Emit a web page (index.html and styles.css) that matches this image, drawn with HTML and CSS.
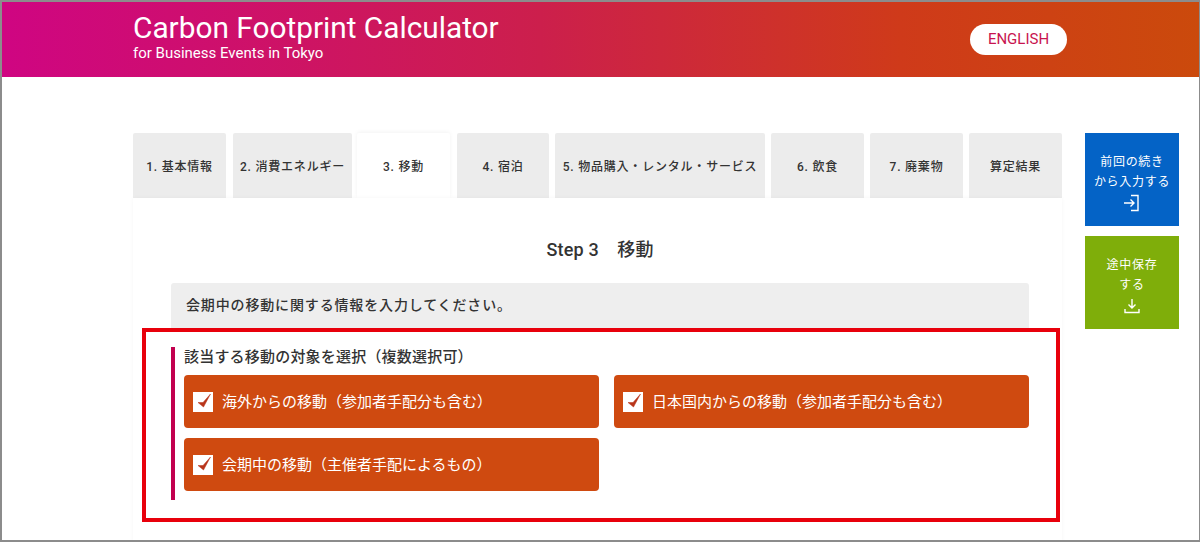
FILE: index.html
```html
<!DOCTYPE html>
<html lang="ja">
<head>
    <meta charset="UTF-8">
    <meta name="viewport" content="width=device-width, initial-scale=1.0">
    <title>Carbon Footprint Calculator</title>
    <link rel="stylesheet" href="styles.css">
</head>
<body>
    <div class="page">
        <header class="site-header">
            <div class="brand">
                <h1>Carbon Footprint Calculator</h1>
                <p class="subtitle">for Business Events in Tokyo</p>
            </div>
            <a href="#" class="lang-button">ENGLISH</a>
        </header>

        <div class="layout">
            <main class="main-column">
                <nav class="tabs">
                    <a href="#" class="tab tab-1">1. 基本情報</a>
                    <a href="#" class="tab tab-2">2. 消費エネルギー</a>
                    <a href="#" class="tab tab-3 active">3. 移動</a>
                    <a href="#" class="tab tab-4">4. 宿泊</a>
                    <a href="#" class="tab tab-5">5. 物品購入・レンタル・サービス</a>
                    <a href="#" class="tab tab-6">6. 飲食</a>
                    <a href="#" class="tab tab-7">7. 廃棄物</a>
                    <a href="#" class="tab tab-8">算定結果</a>
                </nav>

                <section class="panel">
                    <h2 class="step-title">Step 3　移動</h2>
                    <p class="notice">会期中の移動に関する情報を入力してください。</p>

                    <div class="target-section">
                        <h3>該当する移動の対象を選択（複数選択可）</h3>
                        <div class="options">
                            <label class="option">
                                <svg class="check" viewBox="0 0 20 20"><rect width="20" height="20" fill="#fff"/><path d="M5 10.5l5.5 4.5L17.5 2 10 10.5z" fill="#b8341a" stroke="#b8341a" stroke-width="0.5" stroke-linejoin="round"/></svg>
                                <span>海外からの移動（参加者手配分も含む）</span>
                            </label>
                            <label class="option">
                                <svg class="check" viewBox="0 0 20 20"><rect width="20" height="20" fill="#fff"/><path d="M5 10.5l5.5 4.5L17.5 2 10 10.5z" fill="#b8341a" stroke="#b8341a" stroke-width="0.5" stroke-linejoin="round"/></svg>
                                <span>日本国内からの移動（参加者手配分も含む）</span>
                            </label>
                            <label class="option">
                                <svg class="check" viewBox="0 0 20 20"><rect width="20" height="20" fill="#fff"/><path d="M5 10.5l5.5 4.5L17.5 2 10 10.5z" fill="#b8341a" stroke="#b8341a" stroke-width="0.5" stroke-linejoin="round"/></svg>
                                <span>会期中の移動（主催者手配によるもの）</span>
                            </label>
                        </div>
                    </div>

                    <div class="highlight-box"></div>
                </section>
            </main>

            <aside class="side-actions">
                <a href="#" class="side-button side-blue">
                    <span>前回の続き</span>
                    <span>から入力する</span>
                    <svg viewBox="0 0 18 18" width="18" height="18" fill="none" stroke="#fff" stroke-width="1.4"><path d="M1 9h10M7.5 5.5L11 9l-3.5 3.5"/><path d="M8 1.5h7v15H8"/></svg>
                </a>
                <a href="#" class="side-button side-green">
                    <span>途中保存</span>
                    <span>する</span>
                    <svg viewBox="0 0 18 18" width="18" height="18" fill="none" stroke="#fff" stroke-width="1.4"><path d="M9 2v9M5.5 7.5L9 11l3.5-3.5"/><path d="M2 12v3.5h14V12"/></svg>
                </a>
            </aside>
        </div>
    </div>
</body>
</html>
```

FILE: styles.css
```css
* {
    margin: 0;
    padding: 0;
    box-sizing: border-box;
}

body {
    background-color: #ffffff;
    color: #333333;
    font-family: Roboto, "Noto Sans CJK JP", sans-serif;
}

a {
    text-decoration: none;
}

.page {
    width: 1200px;
    height: 542px;
    overflow: hidden;
    border: 2px solid #8c8c8c;
    border-right-width: 1px;
}

.site-header {
    height: 75px;
    padding: 0 132px 0 131px;
    display: flex;
    justify-content: space-between;
    align-items: center;
    background: linear-gradient(90deg, #cf0582 0%, #cc1f4c 45%, #cf3a1a 75%, #cb4a0c 100%);
    color: #ffffff;
}

.brand h1 {
    font-size: 29.8px;
    font-weight: 400;
    line-height: 34px;
    margin-top: -8px;
}

.subtitle {
    font-size: 15px;
    line-height: 16px;
    margin-top: 0;
}

.lang-button {
    width: 97px;
    height: 31px;
    border-radius: 16px;
    background-color: #ffffff;
    color: #c8144f;
    font-size: 15px;
    line-height: 31px;
    text-align: center;
}

.layout {
    display: flex;
    padding: 56px 0 0 131px;
}

.main-column {
    width: 929px;
}

.tabs {
    display: flex;
    height: 65px;
}

.tab {
    display: flex;
    align-items: center;
    justify-content: center;
    background-color: #ececec;
    border-radius: 2px 2px 0 0;
    color: #333333;
    font-size: 12px;
    font-weight: 500;
    letter-spacing: 0.8px;
    white-space: nowrap;
}

.tab-1 { width: 93px; margin-right: 7px; }
.tab-2 { width: 119px; margin-right: 5px; }
.tab-3 { width: 93px; margin-right: 7px; }
.tab-4 { width: 92px; margin-right: 6px; }
.tab-5 { width: 210px; margin-right: 6px; }
.tab-6 { width: 93px; margin-right: 6px; }
.tab-7 { width: 93px; margin-right: 6px; }
.tab-8 { width: 93px; }

.tab.active {
    background-color: #ffffff;
    box-shadow: 0 -1px 4px rgba(0, 0, 0, 0.05);
}

.panel {
    position: relative;
    padding: 38px 33px 0 38px;
    box-shadow: 0 0 4px rgba(0, 0, 0, 0.04);
    height: 345px;
    background-color: #ffffff;
}

.step-title {
    font-size: 18px;
    font-weight: 500;
    line-height: 28px;
    letter-spacing: 0.2px;
    text-align: center;
}

.notice {
    margin-top: 19px;
    height: 47px;
    padding: 0 15px;
    background-color: #eeeeee;
    font-size: 14px;
    font-weight: 500;
    line-height: 44px;
    letter-spacing: 0.85px;
    border-radius: 3px 3px 0 0;
}

.target-section {
    margin-top: 17px;
    padding-left: 9px;
    height: 153px;
    border-left: 4px solid #c2004f;
}

.target-section h3 {
    font-size: 15px;
    font-weight: 500;
    line-height: 20px;
    margin-bottom: 8px;
    letter-spacing: 0.2px;
}

.options {
    display: grid;
    grid-template-columns: 415px 415px;
    column-gap: 15px;
    row-gap: 10px;
}

.option {
    height: 53px;
    padding-left: 9px;
    display: flex;
    align-items: center;
    gap: 9px;
    background-color: #cf4a10;
    border-radius: 4px;
    color: #ffffff;
    font-size: 15px;
}

.option span {
    padding-bottom: 3px;
}

.check {
    width: 20px;
    height: 20px;
    flex-shrink: 0;
}

.highlight-box {
    position: absolute;
    left: 9px;
    top: 130px;
    width: 918px;
    height: 194px;
    border: 4px solid #e8000c;
}

.side-actions {
    margin-left: 23px;
    display: flex;
    flex-direction: column;
    gap: 10px;
}

.side-button {
    width: 94px;
    height: 93px;
    padding-top: 4px;
    display: flex;
    flex-direction: column;
    align-items: center;
    justify-content: center;
    color: #ffffff;
    font-size: 12px;
    line-height: 20px;
    letter-spacing: 0.7px;
}

.side-button svg {
    margin-top: 2px;
}

.side-blue {
    background-color: #0463c6;
}

.side-green {
    background-color: #7fae0a;
}
```
